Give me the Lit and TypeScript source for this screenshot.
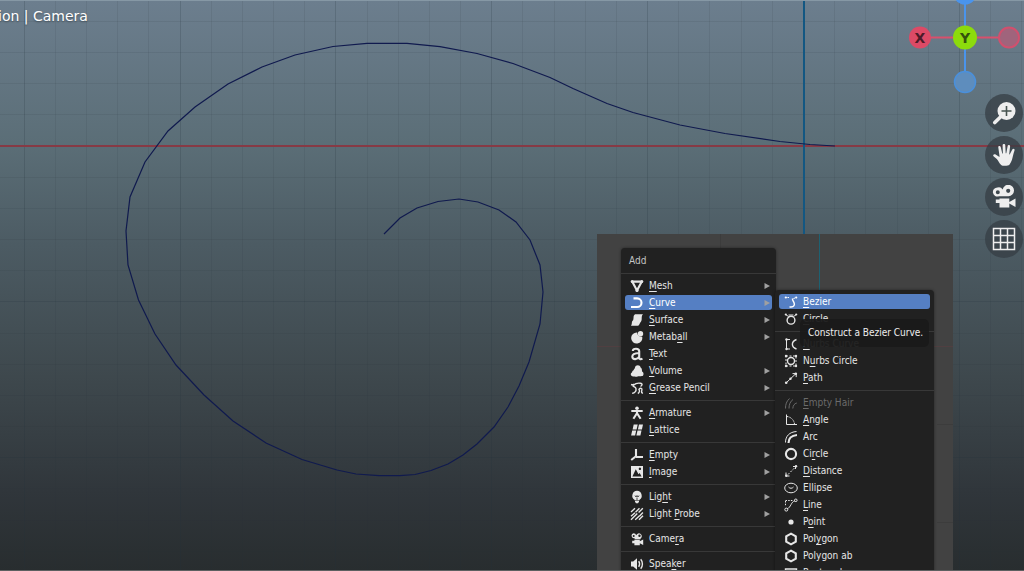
import { LitElement, html, svg, css, nothing } from "lit";
import { customElement, property } from "lit/decorators.js";

type Entry = {
  label: string;
  icon: string;
  /* index of the underlined shortcut letter, -1 for none */
  key: number;
  arrow?: boolean;
  active?: boolean;
  disabled?: boolean;
};

const ADD_GROUPS: Entry[][] = [
  [
    { label: "Mesh", icon: "mesh", key: 0, arrow: true },
    { label: "Curve", icon: "curve", key: 0, arrow: true, active: true },
    { label: "Surface", icon: "surface", key: 0, arrow: true },
    { label: "Metaball", icon: "metaball", key: 5, arrow: true },
    { label: "Text", icon: "text", key: 0 },
    { label: "Volume", icon: "volume", key: 0, arrow: true },
    { label: "Grease Pencil", icon: "grease", key: 0, arrow: true },
  ],
  [
    { label: "Armature", icon: "armature", key: 0, arrow: true },
    { label: "Lattice", icon: "lattice", key: 0 },
  ],
  [
    { label: "Empty", icon: "empty", key: 0, arrow: true },
    { label: "Image", icon: "image", key: 0, arrow: true },
  ],
  [
    { label: "Light", icon: "light", key: 3, arrow: true },
    { label: "Light Probe", icon: "probe", key: 6, arrow: true },
  ],
  [{ label: "Camera", icon: "camera", key: 4 }],
  [{ label: "Speaker", icon: "speaker", key: 4 }],
];

const CURVE_GROUPS: Entry[][] = [
  [
    { label: "Bezier", icon: "bezier", key: 0, active: true },
    { label: "Circle", icon: "bcircle", key: 0 },
  ],
  [
    { label: "Nurbs Curve", icon: "ncurve", key: 0 },
    { label: "Nurbs Circle", icon: "ncircle", key: 1 },
    { label: "Path", icon: "path", key: 0 },
  ],
  [
    { label: "Empty Hair", icon: "hair", key: 0, disabled: true },
    { label: "Angle", icon: "angle", key: 0 },
    { label: "Arc", icon: "arc", key: -1 },
    { label: "Circle", icon: "ring", key: 2 },
    { label: "Distance", icon: "distance", key: 0 },
    { label: "Ellipse", icon: "ellipse", key: -1 },
    { label: "Line", icon: "line", key: 0 },
    { label: "Point", icon: "point", key: 1 },
    { label: "Polygon", icon: "polygon", key: 3 },
    { label: "Polygon ab", icon: "polygon", key: -1 },
    { label: "Rectangle", icon: "rectangle", key: 0 },
  ],
];

const ICONS: Record<string, unknown> = {
  mesh: svg`<path class="s2" d="M2.2 2.6h9.6L7 11.6z" stroke-linejoin="round"/><circle class="fill" cx="2.2" cy="2.5" r="1.5"/><circle class="fill" cx="11.8" cy="2.5" r="1.5"/><circle class="fill" cx="7" cy="11.4" r="1.6"/>`,
  curve: svg`<path class="s2" d="M3.5 2.4H7.2a4.3 4.3 0 0 1 0 8.600H1"/>`,
  surface: svg`<path class="fill" d="M5 1.3h8c-1.5 1-1.200 3-1.300 5S10.700 9 9.900 10.200 9 12.700 7.800 12.800H1c1.200-1.300.6-3.800 1.200-4.500S3.400 7.300 3.500 5 4 2.200 5 1.300z"/>`,
  metaball: svg`<path class="fill" d="M7.200 2.400C7 4.800 8.800 6.900 12.200 6.800A5.600 5.600 0 1 1 7.200 2.400z"/><circle class="fill" cx="10.5" cy="3.7" r="2.7"/>`,
  text: svg`<path class="s2" d="M2.800 4C3 1 9.200.8 9.200 4.300v6.500c0 1.400 1.700 1.900 3.200.7M9.200 6C5 6.200 2.300 7.200 2.300 9.600c.2 3.600 5.500 3 6.900.2"/>`,
  volume: svg`<path class="fill" d="M5 3.500C5.500.5 10.200.7 10.600 3.400c1.600.9 1.300 3 1.500 4.200 2 .8 1.800 4.300-.2 4.500-2 .4-3-.1-4.300.3-1.800.9-3.200.1-4.200.2C.4 12.300 0 9.200 2 8.400c.2-1 .5-1.500 1.300-1.900C4 5.300 4.600 5 5 3.500z"/>`,
  grease: svg`<path class="s15" d="M1 3.500c1.500.5 2.700.3 3.300-.6M2.200 12.300C4.500 12.500 6.500 10 6 7.600S1.800 6 3.500 4.300s4-2.500 6.800-2.100 1.700 2.500.2 3.300M7.800 12.500c2-1 2.200-3.500.7-4.500M9 8.300c1.500-1.800 3.600-1 2.800 1.200-.5 1.500-.2 2.800 1.200 2.500"/>`,
  armature: svg`<circle class="fill" cx="7" cy="2.300" r="1.800"/><path class="s2" d="M1.300 5h11.400M7 4.500v4M6.800 7.500L3.400 12.700M7.200 7.500l3.400 5.200"/>`,
  lattice: svg`<path class="fill" d="M3.700 1.500h4l-1.100 5h-4zM9 1.500h4l-1.100 5h-4zM2.200 7.500h4l-1.100 5h-4zM7.500 7.500h4l-1.100 5h-4z"/>`,
  empty: svg`<path class="s2" d="M6 1v8M5.600 8.500L1.200 12M6 9h7"/>`,
  image: svg`<path class="fill" fill-rule="evenodd" d="M1 1h12v12H1zM9.900 2.600a1.200 1.200 0 1 0 .01 0zM2.400 11.500h9.200L9.700 8 8.500 9.300 5.800 4.300z"/>`,
  light: svg`<path class="fill" d="M7 .8a4.900 4.900 0 0 1 2.500 9V10.200H4.500v-.4A4.900 4.900 0 0 1 7 .8z"/><path class="fill" d="M5 10.800h4v1l-1 1.500H6l-1-1.500z"/><path class="cut" d="M5 5.500L6 7l1-1.500L8 7l1-1.500M7 7.500V10"/>`,
  probe: svg`<path class="s15" d="M1 5l4-3.700M1 9.300L5 5.800M1 12.800L7.300 6.500M5.500 5.200l4-3.900M8.600 5.500l4.200-4.200M5.200 12.800L9.500 8.700M9 12.800l4-4M9.600 9l3.300-3.400"/>`,
  camera: svg`<path class="fill" fill-rule="evenodd" d="M3.600 1.300a2.500 2.500 0 1 0 1 4.900l.2 1h5.700l.1-.6A2.900 2.900 0 1 0 6.200 3.200 2.700 2.700 0 0 0 3.600 1.300zM3.700 2.900a1 1 0 1 1 0 2a1 1 0 0 1 0-2zM9.500 2.500a1.200 1.200 0 1 1 0 2.400a1.200 1.200 0 0 1 0-2.400z"/><path class="fill" d="M4.400 7.800h5.400v1.400l3.400-1.600v5.400l-3.400-1.700v1.900H4.400v-2H2.200V8.800h2.200z"/>`,
  speaker: svg`<path class="fill" d="M1 4.500h2.200L7 1.200v11.600L3.200 9.500H1z"/><path class="s15" d="M8.700 4.200c1 1.500 1 4 0 5.600M10.700 2.200c2.300 2.500 2.300 7 0 9.600"/>`,
  bezier: svg`<path class="s15" d="M5.500 12h1.500c3 0 4-2.300 3-4.400S8.300 5 8.500 3.500"/><path class="s1" stroke-dasharray="1.5 1" d="M1 2.500h4M9.500 3.500l3.500-1"/><circle class="fill" cx="1.8" cy="2.5" r="1.1"/><circle class="fill" cx="12.2" cy="2.5" r="1.1"/>`,
  bcircle: svg`<circle class="s15" cx="7" cy="8.2" r="3.9"/><path class="s1" d="M1.500 2.500l3 2M12.500 2.500l-3 2M4.500 3h5"/><circle class="fill" cx="1.8" cy="2.5" r="1.1"/><circle class="fill" cx="12.2" cy="2.5" r="1.1"/>`,
  ncurve: svg`<path class="s1" d="M6 2.500H2.500v9.500H6"/><path class="s15" d="M12.500 2.500C7 4.500 7 10 12.500 12"/><circle class="fill" cx="2.5" cy="2.5" r="1.2"/><circle class="fill" cx="2.5" cy="12" r="1.2"/>`,
  ncircle: svg`<circle class="s15" cx="7" cy="7" r="3.5"/><path class="s1" stroke-dasharray="2 1.5" d="M2 2h10v10H2z"/><circle class="fill" cx="2" cy="2" r="1.2"/><circle class="fill" cx="12" cy="2" r="1.2"/><circle class="fill" cx="2" cy="12" r="1.2"/><circle class="fill" cx="12" cy="12" r="1.2"/>`,
  path: svg`<path class="s1" d="M2 12L12 2.500M8.500 2.600h3.700v3.500"/><circle class="fill" cx="2.2" cy="11.8" r="1.3"/><circle class="fill" cx="6.5" cy="7.7" r="1.2"/><circle class="fill" cx="11.8" cy="2.7" r="1.3"/>`,
  hair: svg`<path class="s1" d="M1.500 12.500c0-4 .8-7 4-10M5 12.500c0-4 1.200-7 4-9M8.800 12.500c.3-3 1.500-5 4-5.500"/>`,
  angle: svg`<path class="s1" d="M2.500 1.500v10h10.500"/><path class="s1" stroke-dasharray="1.5 1" d="M3 3.500c4 .5 7 3.500 7.500 7.500"/>`,
  arc: svg`<path class="s2" d="M4.500 13c0-4.500 3-7.500 8.500-8"/><path class="s1" d="M1.500 12.500C1.500 6 5.500 2 12.500 1.500"/>`,
  ring: svg`<circle class="s2" cx="7" cy="7" r="5.1"/>`,
  distance: svg`<path class="s1" stroke-dasharray="2 1.5" d="M4 10.500l6.500-6.500"/><path class="s1" d="M2 8.500v3.500h3.500M9 2.500h2.500V5"/><circle class="fill" cx="12" cy="2.2" r="1.2"/><circle class="fill" cx="2.2" cy="11.8" r="1.2"/>`,
  ellipse: svg`<ellipse class="s1" cx="7" cy="7" rx="6.3" ry="4.8"/><path class="s1" d="M4.500 6c1.500 1.700 3.500 1.700 5 0"/>`,
  line: svg`<path class="s1" d="M3 11C7 9.500 7 3.500 11 2.800"/><path class="s1" stroke-dasharray="1.5 1.2" d="M1.500 2.500h8M1.500 3v5"/><circle class="s1" cx="2.3" cy="11.6" r="1.5"/><circle class="s1" cx="11.8" cy="2.3" r="1.3"/>`,
  point: svg`<circle class="fill" cx="7" cy="7" r="2.6"/>`,
  polygon: svg`<path class="s2" d="M7 1.600l4.800 2.700v5.400L7 12.400 2.200 9.700V4.300z"/>`,
  rectangle: svg`<path class="s15" d="M1.500 3h11v8h-11z"/>`,
};

@customElement("add-menu")
export class AddMenu extends LitElement {
  @property() heading = "";
  @property({ attribute: false }) groups: Entry[][] = [];

  static styles = css`
    :host {
      display: block;
      box-sizing: border-box;
      background: #212121;
      border-radius: 4px;
      box-shadow: 0 0 3px rgba(0, 0, 0, 0.45);
      padding: 3px 4px;
      color: #e6e6e6;
      font: 10px/15px "DejaVu Sans Condensed", "DejaVu Sans", sans-serif;
    }
    .heading {
      margin: -3px -4px 3px;
      padding: 0 8px;
      border-bottom: 1px solid #383838;
      font: inherit;
      line-height: 25px;
      color: #c4c4c4;
    }
    ul {
      list-style: none;
      margin: 0;
      padding: 0;
    }
    li {
      padding: 1px 0;
    }
    .group + .group {
      margin-top: 8px;
      position: relative;
    }
    .group + .group::before {
      content: "";
      position: absolute;
      top: -4px;
      left: -4px;
      right: -4px;
      height: 1px;
      background: #383838;
    }
    .item {
      display: flex;
      align-items: center;
      gap: 5px;
      width: 100%;
      height: 15px;
      margin: 0;
      padding: 0 2px 0 5px;
      border: 0;
      border-radius: 3px;
      background: none;
      color: inherit;
      font: inherit;
      text-align: left;
    }
    .active {
      background: #557fc3;
      color: #fff;
    }
    .item:disabled {
      color: #6b6b6b;
    }
    .label {
      flex: 1;
      white-space: nowrap;
    }
    .key {
      text-decoration: underline 1px;
      text-underline-offset: 2px;
      text-decoration-skip-ink: none;
    }
    .icon {
      width: 14px;
      height: 14px;
      flex: none;
    }
    .arrow {
      width: 6px;
      height: 6px;
      fill: #a0a0a0;
    }
    .fill {
      fill: currentColor;
    }
    .s1,
    .s15,
    .s2 {
      fill: none;
      stroke: currentColor;
      stroke-width: 1;
    }
    .s15 {
      stroke-width: 1.4;
    }
    .s2 {
      stroke-width: 2.1;
    }
    .cut {
      fill: none;
      stroke: #212121;
      stroke-width: 0.8;
    }
  `;

  private label(e: Entry) {
    if (e.key < 0) return e.label;
    return html`${e.label.slice(0, e.key)}<span class="key">${e.label[e.key]}</span>${e.label.slice(e.key + 1)}`;
  }

  render() {
    return html`
      ${this.heading ? html`<h2 class="heading">${this.heading}</h2>` : nothing}
      ${this.groups.map(
        (group) => html`<ul class="group">
          ${group.map(
            (e) => html`<li>
              <button class="item ${e.active ? "active" : ""}" ?disabled=${e.disabled}>
                <svg class="icon" viewBox="0 0 14 14" aria-hidden="true">${ICONS[e.icon]}</svg>
                <span class="label">${this.label(e)}</span>
                ${e.arrow
                  ? html`<svg class="arrow" viewBox="0 0 6 6" aria-hidden="true"><path d="M0.5 0L6 3L0.5 6z" /></svg>`
                  : nothing}
              </button>
            </li>`
          )}
        </ul>`
      )}
    `;
  }
}

const SPIRAL =
  "384,234 400,218 417,208 438,201.5 459,199 478,202 499,210 516,222 530,240 540,265 543,292 540,324 529,362 519,386 508,407 494,427 477,444 463,455 448,464 431,470.5 415,474.5 400,475.7 379,475.7 356,474 337,470 302,459.5 266,443 233,421 204,395 176,365 155,334 138.5,300 128,265 126,231 130,197 145,162 168,131 195,107 228,84 262,67 295,55 333,46.5 367,43.3 407,43.3 440,46.7 477,53.5 513,63.5 550,77.5 573,88.5 607,103.5 633,112.5 680,125 725,133.5 780,141.5 810,144.5 835,146";

const columns = Array.from({ length: 33 }, (_, i) => i - 25);
const rows = Array.from({ length: 18 }, (_, i) => i - 4);
const STEP = 31.17;

@customElement("app-root")
export class AppRoot extends LitElement {
  static styles = css`
    :host {
      display: block;
      position: relative;
      height: 100vh;
      overflow: hidden;
      background: linear-gradient(#6c7e8e 0%, #5b6e77 25%, #4c5b63 43%, #3e484d 66%, #30363b 86%, #282d2f 100%);
      font-family: "DejaVu Sans Condensed", "DejaVu Sans", sans-serif;
    }
    .scene {
      position: absolute;
      inset: 0;
      width: 100%;
      height: 100%;
    }
    .grid {
      stroke: #24343c;
      stroke-opacity: 0.1;
    }
    .major {
      stroke-opacity: 0.2;
    }
    .x-axis {
      stroke: #873a45;
      stroke-width: 2;
    }
    .z-axis {
      stroke: #135782;
      stroke-width: 2;
    }
    .spiral {
      fill: none;
      stroke: #101a4e;
      stroke-width: 1.2;
    }
    .edge {
      stroke: #8698a5;
    }
    .base {
      position: absolute;
      left: 0;
      right: 0;
      bottom: 0;
      height: 1px;
      background: #5c5f60;
    }
    .title {
      position: absolute;
      top: 6px;
      left: -2px;
      margin: 0;
      color: #fff;
      font: 14px/20px "DejaVu Sans", sans-serif;
      text-shadow: 0 1px 2px rgba(0, 0, 0, 0.35);
      white-space: nowrap;
    }
    .gizmo {
      position: absolute;
      top: 0;
      right: 0;
      width: 120px;
      height: 100px;
    }
    .axis-name {
      font: bold 14px "DejaVu Sans", sans-serif;
      text-anchor: middle;
    }
    .tools {
      position: absolute;
      top: 94px;
      right: 1px;
      display: flex;
      flex-direction: column;
      gap: 4px;
    }
    .tool {
      display: grid;
      place-items: center;
      width: 38px;
      height: 38px;
      padding: 0;
      border: 0;
      border-radius: 50%;
      background: rgba(54, 62, 68, 0.75);
      color: #eee;
    }
    .tool svg {
      width: 24px;
      height: 24px;
    }
    .panel {
      position: absolute;
      top: 234px;
      bottom: 0;
      left: 597px;
      width: 356px;
      background: #424242;
    }
    .faint {
      position: absolute;
      inset: 0;
      width: 100%;
      height: 100%;
    }
    .faint path {
      fill: none;
      stroke-width: 1;
    }
    .faint .faint-z {
      stroke: #1d6172;
    }
    .faint .faint-x {
      stroke: #503f41;
    }
    .faint .faint-grid {
      stroke: #3c3c3c;
    }
    .add {
      position: absolute;
      top: 14px;
      left: 24px;
      width: 155px;
    }
    .curves {
      position: absolute;
      top: 56px;
      left: 178px;
      width: 159px;
    }
    .clip {
      position: absolute;
      inset: 0;
      overflow: hidden;
    }
    .tooltip {
      position: absolute;
      top: 85px;
      left: 203px;
      padding: 6px 6px 6px 8px;
      border-radius: 5px;
      background: rgba(26, 26, 26, 0.95);
      color: #eee;
      font-size: 10px;
      line-height: 16px;
      white-space: nowrap;
    }
    .white {
      fill: currentColor;
    }
    .thin {
      fill: none;
      stroke: currentColor;
      stroke-width: 1.5;
    }
  `;

  render() {
    return html`
      <svg class="scene" aria-hidden="true">
        ${columns.map((i) => {
          const x = Math.round(803 + i * STEP) + 0.5;
          return svg`<line class="grid ${i % 5 === 0 ? "major" : ""}" x1=${x} x2=${x} y1="0" y2="100%" />`;
        })}
        ${rows.map((i) => {
          const y = Math.round(145.5 + i * STEP) + 0.5;
          return svg`<line class="grid ${i % 5 === 0 ? "major" : ""}" y1=${y} y2=${y} x1="0" x2="100%" />`;
        })}
        <line class="x-axis" x1="0" x2="100%" y1="146" y2="146" />
        <line class="z-axis" x1="804" x2="804" y1="0" y2="100%" />
        <line class="edge" x1="0" x2="100%" y1="0.5" y2="0.5" />
        <polyline class="spiral" points=${SPIRAL} />
      </svg>

      <h1 class="title">ion | Camera</h1>

      <svg class="gizmo" viewBox="0 0 120 100" role="img" aria-label="Axes">
        <path d="M61 0V72" stroke="#4a94ec" stroke-width="2" />
        <path d="M16 37.5H95" stroke="#d8506c" stroke-width="2" />
        <circle cx="61" cy="-7" r="11.5" fill="#4a94ec" />
        <circle cx="16" cy="37.5" r="11" fill="#dc4a66" />
        <circle cx="105" cy="37.5" r="10" fill="#a0647c" stroke="#d0506e" stroke-width="2" />
        <circle cx="61" cy="82" r="10.5" fill="#5e8dbd" stroke="#4a90dc" stroke-width="1.5" />
        <circle cx="61" cy="37.5" r="12" fill="#8cdb0c" />
        <text class="axis-name" x="16" y="42.5" fill="#4c1a28">X</text>
        <text class="axis-name" x="61" y="42.5" fill="#33500c">Y</text>
      </svg>

      <nav class="tools" aria-label="Navigate">
        <button class="tool" aria-label="Zoom">
          <svg viewBox="0 0 24 24">
            <circle class="white" cx="14.5" cy="10" r="9" />
            <path d="M9 15.5L2.8 21.5" stroke="currentColor" stroke-width="3.6" stroke-linecap="round" />
            <path d="M14.5 5v10M9.5 10h10" stroke="#46534f" stroke-width="1.6" />
          </svg>
        </button>
        <button class="tool" aria-label="Move">
          <svg viewBox="0 0 24 24">
            <path class="white" d="M7.5 14V13L6.3 4.5c-.2-1.7 2-2 2.4-.4L10.3 10.5h.6L10.6 2.5c0-1.9 2.6-1.9 2.7 0l.4 7.8h.6L15.6 3.2c.4-1.7 2.7-1.3 2.5.4L17.2 11.2l.5.2 2.6-4.8c.9-1.5 2.8-.6 2.2.9-1.3 3.5-1.5 6-2.6 9.5-.5 1.6-1.3 3-2.5 4.700-1.500 1.500-6.700 1.500-8.200.2C7 20 6.200 17.700 4.800 16L1.500 13.200c-1-1.200.3-2.500 1.700-1.900z" />
          </svg>
        </button>
        <button class="tool" aria-label="Camera view">
          <svg viewBox="0 0 24 24">
            <path class="white" fill-rule="evenodd" d="M5.5 2.5a4.5 4.5 0 1 0 1.5 8.7h9.5A5.700 5.700 0 1 0 10.700 4.500 4.700 4.700 0 0 0 5.500 2.500zM5.800 5.200a2 2 0 1 1 0 4 2 2 0 0 1 0-4zM16.200 3.700a2.100 2.100 0 1 1 0 4.200 2.100 2.100 0 0 1 0-4.200z" />
            <path class="white" d="M7.5 13.5h9.800v3.500l6.200-3.500v8.500l-6.200-3.500v4H7.500v-4.500H3.800v-3.500h3.700z" />
          </svg>
        </button>
        <button class="tool" aria-label="Orthographic grid">
          <svg viewBox="0 0 24 24">
            <path class="thin" d="M1.5 1.5h21v21h-21zM8.5 1.5v21M15.5 1.5v21M1.5 8.5h21M1.5 15.5h21" />
          </svg>
        </button>
      </nav>

      <section class="panel" aria-label="Add object">
        <svg class="faint" aria-hidden="true">
          <path class="faint-grid" d="M123.5 0V14M340 190.5H356M340 288.5H356" />
          <path class="faint-z" d="M222.5 0V60" />
          <path class="faint-x" d="M0 112.5H356" />
        </svg>
        <div class="clip">
          <add-menu class="add" heading="Add" .groups=${ADD_GROUPS}></add-menu>
          <add-menu class="curves" .groups=${CURVE_GROUPS}></add-menu>
          <div class="tooltip" role="tooltip">Construct a Bezier Curve.</div>
        </div>
      </section>
      <div class="base"></div>
    `;
  }
}
